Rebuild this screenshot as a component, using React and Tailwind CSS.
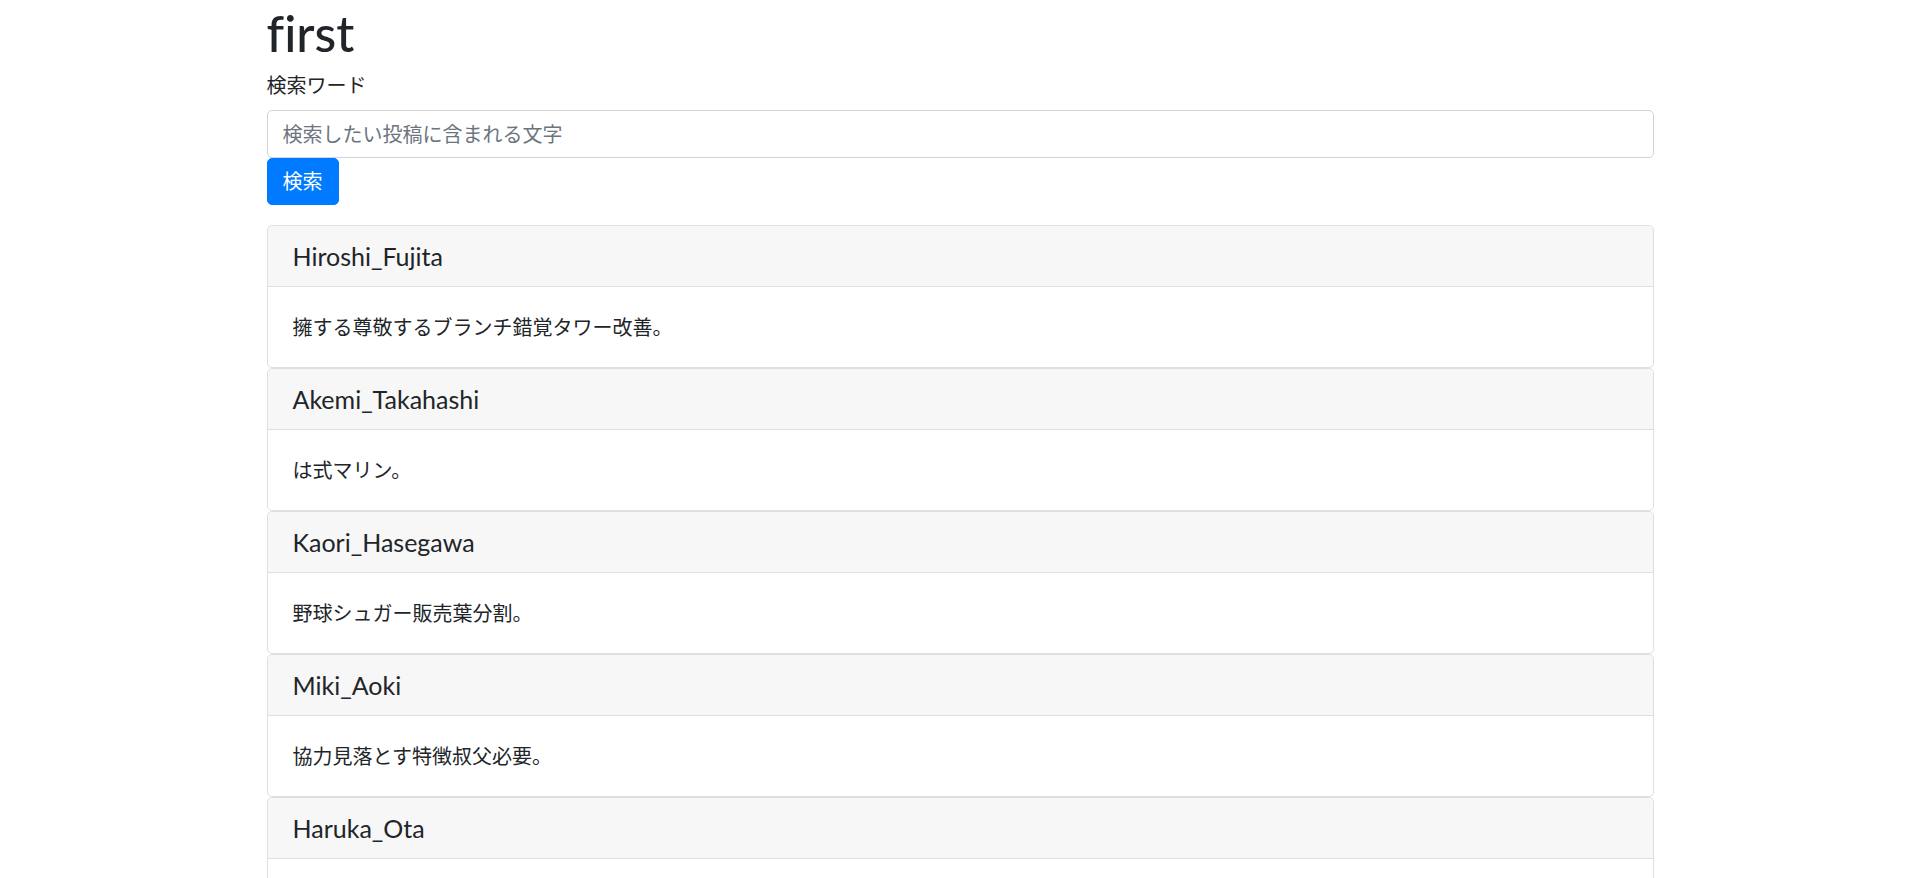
const posts = [
  { name: "Hiroshi_Fujita", body: "擁する尊敬するブランチ錯覚タワー改善。" },
  { name: "Akemi_Takahashi", body: "は式マリン。" },
  { name: "Kaori_Hasegawa", body: "野球シュガー販売葉分割。" },
  { name: "Miki_Aoki", body: "協力見落とす特徴叔父必要。" },
  { name: "Haruka_Ota", body: "情報提供する運動選挙。" },
];

const PostCard = ({ name, body }) => (
  <div className="border border-[#dfdfdf] rounded-[5px] bg-white">
    <div className="bg-[#f7f7f7] border-b border-[#dfdfdf] px-[25px] py-[15px] rounded-t-[5px]">
      <h5 className="text-[25px] leading-[30px] font-normal">{name}</h5>
    </div>
    <div className="p-[25px]">
      <p className="leading-[30px]">{body}</p>
    </div>
  </div>
);

export default function App() {
  return (
    <div
      className="min-h-screen bg-white text-[#212529] text-[20px] leading-[30px] [font-variant-ligatures:none]"
      style={{ fontFamily: 'Lato, "Noto Sans CJK JP", sans-serif' }}
    >
      <div className="w-[1387px] mx-auto">
        <h1 className="text-[50px] leading-[60px] font-medium pt-[3px] mb-[7px]">first</h1>

        <form>
          <label className="block mb-[10px]">検索ワード</label>
          <input
            type="text"
            placeholder="検索したい投稿に含まれる文字"
            className="block w-full h-[47.5px] px-[15px] border border-[#ced4da] rounded-[5px] placeholder:text-[#6c757d] outline-none"
          />
          <button
            type="button"
            className="h-[47.5px] px-[15px] bg-[#007bff] text-white rounded-[5px] border border-[#007bff]"
          >
            検索
          </button>
        </form>

        <div className="mt-[20px]">
          {posts.map((p) => (
            <PostCard key={p.name} name={p.name} body={p.body} />
          ))}
        </div>
      </div>
    </div>
  );
}
